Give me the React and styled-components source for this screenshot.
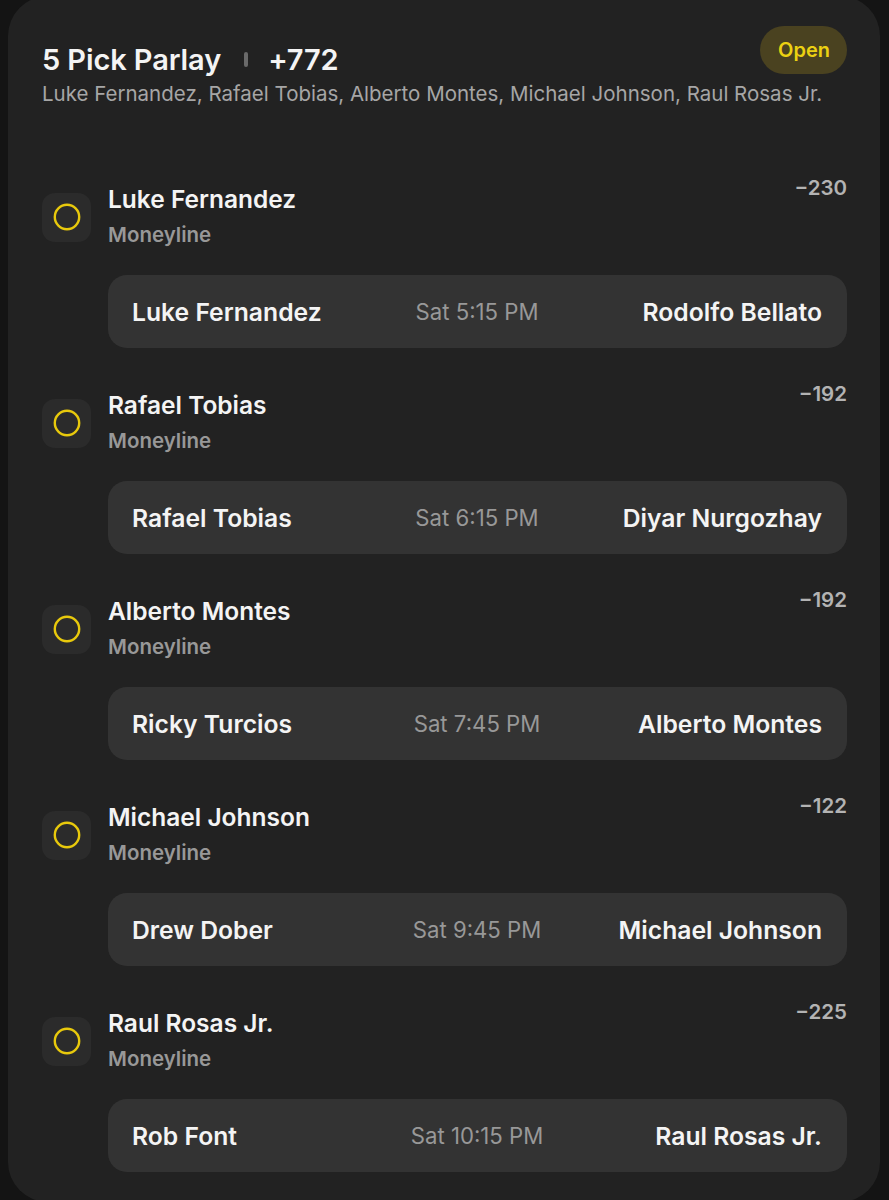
import React from "react";
import styled, { createGlobalStyle } from "styled-components";

const Global = createGlobalStyle`
  html, body { margin: 0; padding: 0; background: #141414; }
  body { font-family: Inter, "Noto Sans", sans-serif; -webkit-font-smoothing: antialiased; }
`;

const Page = styled.div`
  width: 889px;
  height: 1200px;
  overflow: hidden;
  background: #141414;
`;

const Card = styled.div`
  margin: -4px 9px 0 8px;
  height: 1206px;
  box-sizing: border-box;
  background: #222222;
  border-radius: 40px;
  padding: 30px 33px 0 34px;
  display: flex;
  flex-direction: column;
`;

const Header = styled.div`
  display: grid;
  grid-template-columns: 1fr auto;
  align-items: start;
`;

const TitleRow = styled.div`
  display: flex;
  align-items: center;
  gap: 20px;
  height: 34px;
  margin-top: 16px;
`;

const Title = styled.span`
  font-size: 29px;
  font-weight: 600;
  color: #f4f4f4;
  letter-spacing: -0.1px;
`;

const Sep = styled.span`
  width: 4px;
  height: 15px;
  border-radius: 2px;
  background: #6a6a6a;
  margin-left: 3px;
`;

const Subtitle = styled.div`
  grid-column: 1 / -1;
  margin-top: 6px;
  font-size: 20.5px;
  line-height: 24px;
  color: #a6a6a6;
  white-space: nowrap;
`;

const Badge = styled.div`
  height: 48px;
  padding: 0 17px 0 18px;
  display: flex;
  align-items: center;
  border-radius: 24px;
  background: #4a4220;
  color: #ecd112;
  font-size: 20px;
  font-weight: 600;
`;

const Legs = styled.div`
  margin-top: 70px;
  display: flex;
  flex-direction: column;
  gap: 34px;
`;

const Leg = styled.div`
  display: flex;
  flex-direction: column;
  gap: 27px;
`;

const LegHead = styled.div`
  display: grid;
  grid-template-columns: 49px 1fr auto;
  column-gap: 17px;
`;

const IconBox = styled.div`
  width: 49px;
  height: 49px;
  border-radius: 13px;
  background: #2b2b2b;
  display: flex;
  align-items: center;
  justify-content: center;
  align-self: center;
  margin-top: 10px;
`;

const LegText = styled.div`
  display: flex;
  flex-direction: column;
  padding-top: 8px;
`;

const LegName = styled.div`
  font-size: 24.5px;
  line-height: 30px;
  font-weight: 600;
  color: #f4f4f4;
`;

const Market = styled.div`
  margin-top: 8px;
  font-size: 20.5px;
  line-height: 26px;
  font-weight: 600;
  color: #989898;
`;

const Odds = styled.div`
  font-size: 20.5px;
  line-height: 24px;
  font-weight: 600;
  color: #b3b3b3;
`;

const Match = styled.div`
  margin-left: 66px;
  height: 73px;
  border-radius: 19px;
  background: #333333;
  display: grid;
  grid-template-columns: 1fr auto 1fr;
  align-items: center;
  padding: 0 25px 0 24px;
`;

const Fighter = styled.div`
  font-size: 24.7px;
  font-weight: 600;
  color: #f4f4f4;
  text-align: ${(p) => (p.$right ? "right" : "left")};
  white-space: nowrap;
`;

const Time = styled.div`
  font-size: 22.2px;
  color: #989898;
  text-align: center;
  white-space: nowrap;
`;

const Ring = () => (
  <svg width="28" height="28" viewBox="0 0 28 28">
    <circle cx="14" cy="14" r="12.2" fill="none" stroke="#e8c90c" strokeWidth="2.4" />
  </svg>
);

const legs = [
  { pick: "Luke Fernandez", odds: "−230", a: "Luke Fernandez", time: "Sat 5:15 PM", b: "Rodolfo Bellato" },
  { pick: "Rafael Tobias", odds: "−192", a: "Rafael Tobias", time: "Sat 6:15 PM", b: "Diyar Nurgozhay" },
  { pick: "Alberto Montes", odds: "−192", a: "Ricky Turcios", time: "Sat 7:45 PM", b: "Alberto Montes" },
  { pick: "Michael Johnson", odds: "−122", a: "Drew Dober", time: "Sat 9:45 PM", b: "Michael Johnson" },
  { pick: "Raul Rosas Jr.", odds: "−225", a: "Rob Font", time: "Sat 10:15 PM", b: "Raul Rosas Jr." },
];

export default function App() {
  return (
    <Page>
      <Global />
      <Card>
        <Header>
          <TitleRow>
            <Title>5 Pick Parlay</Title>
            <Sep />
            <Title>+772</Title>
          </TitleRow>
          <Badge>Open</Badge>
          <Subtitle>
            Luke Fernandez, Rafael Tobias, Alberto Montes, Michael Johnson, Raul Rosas Jr.
          </Subtitle>
        </Header>
        <Legs>
          {legs.map((l) => (
            <Leg key={l.pick}>
              <LegHead>
                <IconBox>
                  <Ring />
                </IconBox>
                <LegText>
                  <LegName>{l.pick}</LegName>
                  <Market>Moneyline</Market>
                </LegText>
                <Odds>{l.odds}</Odds>
              </LegHead>
              <Match>
                <Fighter>{l.a}</Fighter>
                <Time>{l.time}</Time>
                <Fighter $right>{l.b}</Fighter>
              </Match>
            </Leg>
          ))}
        </Legs>
      </Card>
    </Page>
  );
}
